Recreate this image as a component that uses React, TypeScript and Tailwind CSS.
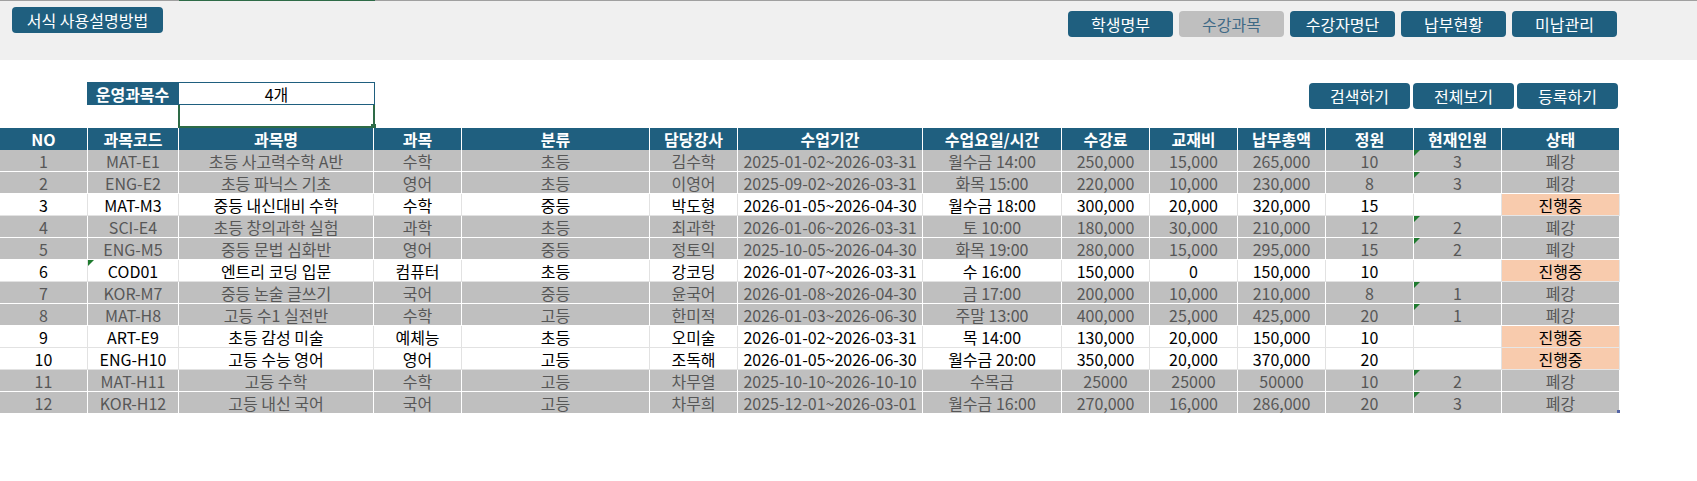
import { Fragment } from 'react';

const navs = [
  { label: '학생명부', active: true },
  { label: '수강과목', active: false },
  { label: '수강자명단', active: true },
  { label: '납부현황', active: true },
  { label: '미납관리', active: true },
];

const headers = ['NO', '과목코드', '과목명', '과목', '분류', '담당강사', '수업기간', '수업요일/시간', '수강료', '교재비', '납부총액', '정원', '현재인원', '상태'];

type Row = {
  cells: string[];
  closed: boolean;
  codeMark?: boolean;
};

const rows: Row[] = [
  { cells: ['1', 'MAT-E1', '초등 사고력수학 A반', '수학', '초등', '김수학', '2025-01-02~2026-03-31', '월수금 14:00', '250,000', '15,000', '265,000', '10', '3', '폐강'], closed: true },
  { cells: ['2', 'ENG-E2', '초등 파닉스 기초', '영어', '초등', '이영어', '2025-09-02~2026-03-31', '화목 15:00', '220,000', '10,000', '230,000', '8', '3', '폐강'], closed: true },
  { cells: ['3', 'MAT-M3', '중등 내신대비 수학', '수학', '중등', '박도형', '2026-01-05~2026-04-30', '월수금 18:00', '300,000', '20,000', '320,000', '15', '', '진행중'], closed: false },
  { cells: ['4', 'SCI-E4', '초등 창의과학 실험', '과학', '초등', '최과학', '2026-01-06~2026-03-31', '토 10:00', '180,000', '30,000', '210,000', '12', '2', '폐강'], closed: true },
  { cells: ['5', 'ENG-M5', '중등 문법 심화반', '영어', '중등', '정토익', '2025-10-05~2026-04-30', '화목 19:00', '280,000', '15,000', '295,000', '15', '2', '폐강'], closed: true },
  { cells: ['6', 'COD01', '엔트리 코딩 입문', '컴퓨터', '초등', '강코딩', '2026-01-07~2026-03-31', '수 16:00', '150,000', '0', '150,000', '10', '', '진행중'], closed: false, codeMark: true },
  { cells: ['7', 'KOR-M7', '중등 논술 글쓰기', '국어', '중등', '윤국어', '2026-01-08~2026-04-30', '금 17:00', '200,000', '10,000', '210,000', '8', '1', '폐강'], closed: true },
  { cells: ['8', 'MAT-H8', '고등 수1 실전반', '수학', '고등', '한미적', '2026-01-03~2026-06-30', '주말 13:00', '400,000', '25,000', '425,000', '20', '1', '폐강'], closed: true },
  { cells: ['9', 'ART-E9', '초등 감성 미술', '예체능', '초등', '오미술', '2026-01-02~2026-03-31', '목 14:00', '130,000', '20,000', '150,000', '10', '', '진행중'], closed: false },
  { cells: ['10', 'ENG-H10', '고등 수능 영어', '영어', '고등', '조독해', '2026-01-05~2026-06-30', '월수금 20:00', '350,000', '20,000', '370,000', '20', '', '진행중'], closed: false },
  { cells: ['11', 'MAT-H11', '고등 수학', '수학', '고등', '차무열', '2025-10-10~2026-10-10', '수목금', '25000', '25000', '50000', '10', '2', '폐강'], closed: true },
  { cells: ['12', 'KOR-H12', '고등 내신 국어', '국어', '고등', '차무희', '2025-12-01~2026-03-01', '월수금 16:00', '270,000', '16,000', '286,000', '20', '3', '폐강'], closed: true },
];

function Mark() {
  return (
    <span className="absolute left-0 top-0 w-0 h-0 border-t-[6px] border-r-[6px] border-t-[#1e7a2e] border-r-transparent" />
  );
}

export default function App() {
  return (
    <div className="w-[1697px] h-[481px] bg-white font-['Noto_Sans_CJK_KR',sans-serif] overflow-hidden">
      {/* top band */}
      <div className="flex h-[1px]">
        <div className="w-[179px] bg-[#a0a0a0]" />
        <div className="w-[196px] bg-[#2e6b47]" />
        <div className="flex-1 bg-[#a0a0a0]" />
      </div>
      <div className="h-[59px] bg-[#f0f0f0] flex justify-between items-start">
        <button className="ml-[12px] mt-[6px] w-[151px] h-[26px] rounded-[4px] bg-[#1f5f7f] text-white text-[16px] leading-none">
          서식 사용설명방법
        </button>
        <div className="mr-[80px] mt-[10px] flex gap-[6px]">
          {navs.map((n) => (
            <button
              key={n.label}
              className={
                n.active
                  ? 'w-[105px] h-[26px] rounded-[4px] bg-[#1f5f7f] text-white text-[16px] leading-none'
                  : 'w-[105px] h-[26px] rounded-[4px] bg-[#bfbfbf] text-[#3f6a86] text-[16px] leading-none'
              }
            >
              {n.label}
            </button>
          ))}
        </div>
      </div>

      {/* summary + actions */}
      <div className="h-[68px] flex justify-between items-start">
        <div className="ml-[87px] mt-[22px] flex flex-col">
          <div className="flex">
            <div className="w-[91px] h-[23px] bg-[#1f5f7f] text-white text-[16px] font-bold flex items-center justify-center">
              운영과목수
            </div>
            <div className="w-[197px] h-[23px] border border-[#1f5f7f] text-[16px] text-black flex items-center justify-center">
              4개
            </div>
          </div>
          <div className="ml-[91px] w-[197px] h-[23px] border-2 border-t-0 border-[#2e6b47] relative">
            <span className="absolute -right-[3px] -bottom-[3px] w-[5px] h-[5px] bg-[#2e6b47]" />
          </div>
        </div>
        <div className="mr-[79px] mt-[23px] flex gap-[3px]">
          {['검색하기', '전체보기', '등록하기'].map((b) => (
            <button key={b} className="w-[101px] h-[26px] rounded-[4px] bg-[#1f5f7f] text-white text-[16px] leading-none">
              {b}
            </button>
          ))}
        </div>
      </div>

      {/* table */}
      <div className="relative w-[1620px] grid grid-cols-[88px_91px_195px_88px_188px_88px_185px_139px_88px_88px_88px_88px_88px_118px]">
        {headers.map((h) => (
          <div
            key={h}
            className="h-[22px] bg-[#1f5f7f] border-r border-white text-white text-[16px] font-bold flex items-center justify-center leading-none"
          >
            {h}
          </div>
        ))}
        {rows.map((r, ri) => (
          <Fragment key={ri}>
            {r.cells.map((c, ci) => {
              const status = ci === 13;
              let cls = 'relative h-[22px] border-r border-b text-[16px] flex items-center justify-center leading-none whitespace-nowrap ';
              if (r.closed) cls += 'bg-[#bfbfbf] border-white text-[#575757]';
              else if (status) cls += 'bg-[#f8cbad] border-[#e6e6e6] text-black';
              else cls += 'bg-white border-[#e2e2e2] text-black';
              return (
                <div key={ci} className={cls}>
                  {((ci === 12 && r.closed) || (ci === 1 && r.codeMark)) && <Mark />}
                  {c}
                </div>
              );
            })}
          </Fragment>
        ))}
        <span className="absolute right-0 bottom-[1px] w-[3px] h-[3px] bg-[#5565a6]" />
      </div>
    </div>
  );
}
